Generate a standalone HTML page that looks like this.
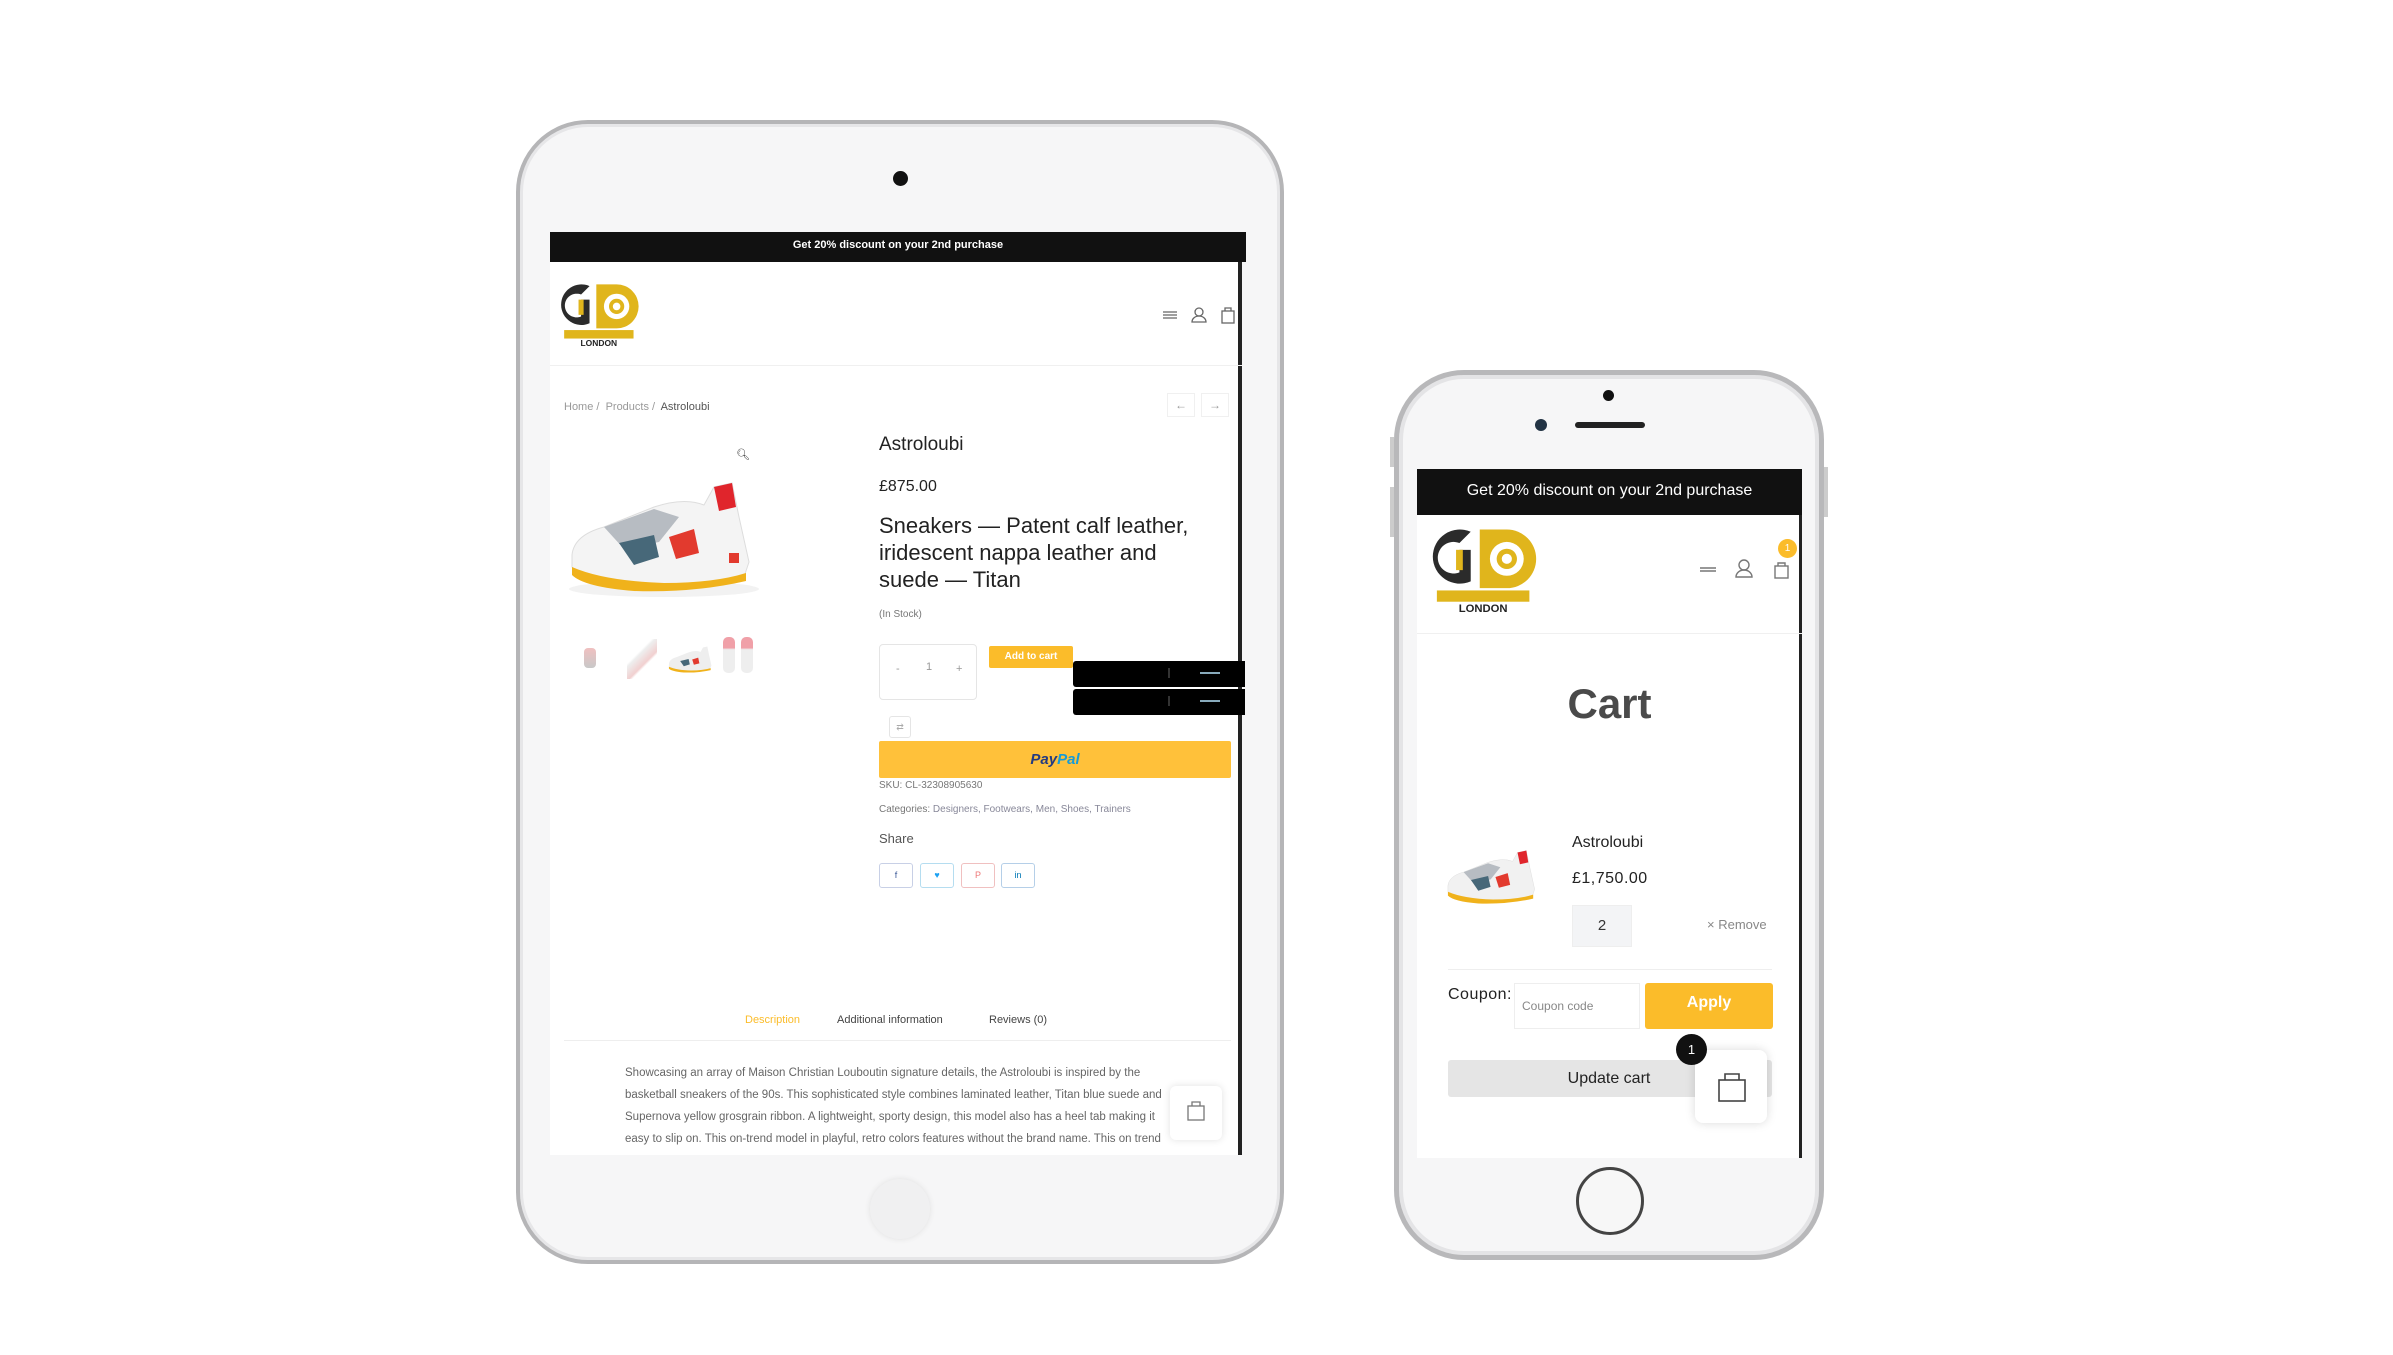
<!DOCTYPE html>
<html><head><meta charset="utf-8"><style>
*{margin:0;padding:0;box-sizing:border-box}
body{width:2393px;height:1355px;background:#fff;position:relative;overflow:hidden;font-family:"Liberation Sans",sans-serif;color:#222}
.a{position:absolute}
.t{position:absolute;white-space:nowrap}
.g{position:absolute;left:0;top:0;width:2393px;height:1355px}
</style></head><body>
<div class="g" style="transform:translate(-5px,-3px)">
<!-- iPad -->
<div class="a" style="left:521px;top:123px;width:768px;height:1144px;border-radius:72px;background:#f6f6f7;border:4px solid #b5b5b7;box-shadow:inset 0 0 0 3px #e6e6e8"></div>
<div class="a" style="left:898px;top:174px;width:15px;height:15px;border-radius:50%;background:#111"></div>
<div class="a" style="left:875px;top:1182px;width:60px;height:60px;border-radius:50%;background:#f0f0f1;box-shadow:0 0 6px #e0e0e0"></div>
<div class="a" style="left:555px;top:235px;width:692px;height:923px;background:#fff;border-right:4px solid #222"></div>
<div class="a" style="left:555px;top:235px;width:696px;height:30px;background:#111"></div>
<div class="t" style="left:555px;top:242px;width:696px;text-align:center;color:#fff;font-size:11px;font-weight:bold">Get 20% discount on your 2nd purchase</div>
<svg class="a" style="left:560px;top:284px" width="86" height="66" viewBox="0 0 100 78">
<path d="M40 6 A24 24 0 1 0 40 50 L40 22 L30 22 L30 42 A14 14 0 1 1 30 16 Z" fill="#2b2b2b"/>
<rect x="27" y="22" width="6" height="18" fill="#e0b51c"/>
<path d="M48 4 H72 A26 26 0 0 1 72 56 H48 Z" fill="#e0b51c"/>
<circle cx="72" cy="30" r="15" fill="#fff"/><circle cx="72" cy="30" r="9" fill="#e0b51c"/><circle cx="72" cy="30" r="4.5" fill="#fff"/>
<rect x="10" y="58" width="82" height="10" fill="#e0b51c"/>
<text x="51" y="77" text-anchor="middle" font-size="10" font-weight="bold" fill="#222" font-family="Liberation Sans">LONDON</text>
</svg>
<svg class="a" style="left:1166px;top:308px" width="80" height="20" viewBox="0 0 80 20" fill="none" stroke="#666" stroke-width="1.3">
<path d="M2 7h14M2 10h14M2 13h14"/><circle cx="38" cy="7" r="4"/><path d="M31 17a7 6 0 0 1 14 0z"/><rect x="61" y="6" width="12" height="12"/><path d="M64 6v-3h6v3"/>
</svg>
<div class="a" style="left:555px;top:368px;width:692px;height:1px;background:#f0f0f0"></div>
<div class="t" style="left:569px;top:404px;font-size:11px;color:#999">Home /&nbsp; Products /&nbsp; <span style="color:#555">Astroloubi</span></div>
<div class="a" style="left:1172px;top:396px;width:28px;height:24px;border:1px solid #f0f0f0;color:#999;font-size:12px;text-align:center;line-height:22px">←</div>
<div class="a" style="left:1206px;top:396px;width:28px;height:24px;border:1px solid #f0f0f0;color:#999;font-size:12px;text-align:center;line-height:22px">→</div>
<div class="t" style="left:741px;top:451px;font-size:11px;color:#333">&#x1F50D;&#xFE0E;</div>
<svg class="a" style="left:568px;top:480px" width="202" height="124" viewBox="0 0 200 124">
<ellipse cx="100" cy="112" rx="95" ry="8" fill="#f2f2f2"/>
<path d="M8 78 Q10 58 40 50 L90 30 Q120 20 140 28 L150 10 L168 6 L175 40 L185 85 L180 100 Q120 112 60 106 Q20 104 8 90Z" fill="#f4f4f4" stroke="#ddd"/>
<path d="M40 50 L90 32 L115 40 L95 65 L60 72Z" fill="#b7bcc2"/>
<path d="M55 66 L90 58 L95 80 L70 88Z" fill="#476879"/>
<path d="M105 60 L130 52 L135 76 L112 82Z" fill="#e23a2e"/>
<path d="M150 10 L168 6 L172 30 L155 34Z" fill="#e0252c"/>
<path d="M8 90 Q40 104 100 106 Q150 106 182 96 L182 104 Q130 116 70 114 Q20 110 8 98Z" fill="#f0b21b"/>
<rect x="165" y="76" width="10" height="10" fill="#e23a2e"/>
</svg>
<div class="a" style="left:589px;top:651px;width:12px;height:20px;background:linear-gradient(#f0c0c0,#c8c8c8);border-radius:4px"></div>
<div class="a" style="left:632px;top:642px;width:30px;height:40px;background:linear-gradient(135deg,transparent 35%,#eee 40%,#f1d0d0 60%,transparent 65%)"></div>
<svg class="a" style="left:672px;top:648px" width="48" height="30" viewBox="0 0 200 124"><path d="M8 78 Q10 58 40 50 L90 30 Q120 20 140 28 L150 10 L168 6 L175 40 L185 85 L180 100 Q120 112 60 106 Q20 104 8 90Z" fill="#eee"/><path d="M55 66 L90 58 L95 80 L70 88Z" fill="#476879"/><path d="M105 60 L130 52 L135 76 L112 82Z" fill="#e23a2e"/><path d="M8 90 Q40 104 100 106 Q150 106 182 96 L182 104 Q130 116 70 114 Q20 110 8 98Z" fill="#f0b21b"/></svg>
<div class="a" style="left:728px;top:640px;width:12px;height:36px;background:linear-gradient(#f0a0a8 30%,#eee 35%);border-radius:5px"></div>
<div class="a" style="left:746px;top:640px;width:12px;height:36px;background:linear-gradient(#f0a0a8 30%,#eee 35%);border-radius:5px"></div>
<div class="t" style="left:884px;top:437px;font-size:19px;color:#222">Astroloubi</div>
<div class="t" style="left:884px;top:481px;font-size:16px;color:#222">£875.00</div>
<div class="a" style="left:884px;top:515px;width:340px;font-size:22px;line-height:27px;color:#222">Sneakers — Patent calf leather, iridescent nappa leather and suede — Titan</div>
<div class="t" style="left:884px;top:612px;font-size:10px;color:#777">(In Stock)</div>
<div class="a" style="left:884px;top:647px;width:98px;height:56px;border:1px solid #e5e5e5;border-radius:4px;font-size:11px;color:#999"><span class="t" style="left:16px;top:18px">-</span><span class="t" style="left:46px;top:16px">1</span><span class="t" style="left:76px;top:18px">+</span></div>
<div class="a" style="left:994px;top:649px;width:84px;height:22px;background:#fbbc2a;border-radius:2px;color:#fff;font-size:10px;font-weight:bold;text-align:center;line-height:22px">Add to cart</div>
<div class="a" style="left:1078px;top:664px;width:172px;height:26px;background:#000;border-radius:3px 0 0 3px"></div>
<div class="a" style="left:1078px;top:692px;width:172px;height:26px;background:#000;border-radius:3px 0 0 3px"></div>
<div class="a" style="left:1173px;top:671px;width:2px;height:10px;background:#333"></div><div class="a" style="left:1205px;top:675px;width:20px;height:2px;background:#8ab"></div>
<div class="a" style="left:1173px;top:699px;width:2px;height:10px;background:#333"></div><div class="a" style="left:1205px;top:703px;width:20px;height:2px;background:#8ab"></div>
<div class="a" style="left:894px;top:719px;width:22px;height:22px;border:1px solid #e5e5e5;border-radius:3px;font-size:9px;color:#aaa;text-align:center;line-height:20px">⇄</div>
<div class="a" style="left:884px;top:744px;width:352px;height:37px;background:#ffc13a;border-radius:2px;text-align:center;line-height:37px;font-size:15px;font-weight:bold;font-style:italic"><span style="color:#253b80">Pay</span><span style="color:#179bd7">Pal</span></div>
<div class="t" style="left:884px;top:783px;font-size:10px;color:#777">SKU: CL-32308905630</div>
<div class="t" style="left:884px;top:807px;font-size:10px;color:#777">Categories: <span style="color:#889">Designers, Footwears, Men, Shoes, Trainers</span></div>
<div class="t" style="left:884px;top:834px;font-size:13px;color:#555">Share</div>
<div class="a" style="left:884px;top:866px;width:34px;height:25px;border:1px solid #c8d0e6;border-radius:3px;font-size:9px;color:#3b5998;text-align:center;line-height:23px">f</div>
<div class="a" style="left:925px;top:866px;width:34px;height:25px;border:1px solid #b5ddf0;border-radius:3px;font-size:9px;color:#1da1f2;text-align:center;line-height:23px">♥</div>
<div class="a" style="left:966px;top:866px;width:34px;height:25px;border:1px solid #f0c0c0;border-radius:3px;font-size:9px;color:#e77;text-align:center;line-height:23px">P</div>
<div class="a" style="left:1006px;top:866px;width:34px;height:25px;border:1px solid #b5cfe8;border-radius:3px;font-size:9px;color:#0077b5;text-align:center;line-height:23px">in</div>
<div class="t" style="left:750px;top:1017px;font-size:11px;color:#fbbc2a">Description</div>
<div class="t" style="left:842px;top:1017px;font-size:11px;color:#444">Additional information</div>
<div class="t" style="left:994px;top:1017px;font-size:11px;color:#444">Reviews (0)</div>
<div class="a" style="left:569px;top:1043px;width:667px;height:1px;background:#eee"></div>
<div class="a" style="left:630px;top:1065px;width:545px;height:93px;overflow:hidden;font-size:11.5px;line-height:22px;color:#666">Showcasing an array of Maison Christian Louboutin signature details, the Astroloubi is inspired by the basketball sneakers of the 90s. This sophisticated style combines laminated leather, Titan blue suede and Supernova yellow grosgrain ribbon. A lightweight, sporty design, this model also has a heel tab making it easy to slip on. This on-trend model in playful, retro colors features without the brand name. This on trend model</div>
<div class="a" style="left:1175px;top:1089px;width:52px;height:54px;background:#fff;border-radius:6px;box-shadow:0 0 8px rgba(0,0,0,.12)"></div>
<svg class="a" style="left:1191px;top:1103px" width="20" height="22" viewBox="0 0 20 22" fill="none" stroke="#777" stroke-width="1.3"><rect x="2" y="6" width="16" height="14"/><path d="M6 6V2h8v4"/></svg>
</div>

<div class="g" style="transform:translate(-8px,-3px)">
<!-- iPhone -->
<div class="a" style="left:1402px;top:373px;width:430px;height:890px;border-radius:70px;background:#f6f6f7;border:5px solid #b8b8ba;box-shadow:inset 0 0 0 4px #e4e4e6"></div>
<div class="a" style="left:1398px;top:440px;width:4px;height:30px;background:#ccc"></div>
<div class="a" style="left:1398px;top:490px;width:4px;height:50px;background:#ccc"></div>
<div class="a" style="left:1832px;top:470px;width:4px;height:50px;background:#ccc"></div>
<div class="a" style="left:1611px;top:393px;width:11px;height:11px;border-radius:50%;background:#111"></div>
<div class="a" style="left:1543px;top:422px;width:12px;height:12px;border-radius:50%;background:#234"></div>
<div class="a" style="left:1583px;top:425px;width:70px;height:6px;border-radius:3px;background:#222"></div>
<div class="a" style="left:1584px;top:1170px;width:68px;height:68px;border-radius:50%;border:3px solid #444;background:#f7f7f7"></div>
<div class="a" style="left:1425px;top:472px;width:385px;height:689px;background:#fff;border-right:3px solid #222"></div>
<div class="a" style="left:1425px;top:472px;width:385px;height:46px;background:#111"></div>
<div class="t" style="left:1425px;top:485px;width:385px;text-align:center;color:#fff;font-size:16px">Get 20% discount on your 2nd purchase</div>
<svg class="a" style="left:1433px;top:528px" width="114" height="88" viewBox="0 0 100 78">
<path d="M40 6 A24 24 0 1 0 40 50 L40 22 L30 22 L30 42 A14 14 0 1 1 30 16 Z" fill="#2b2b2b"/>
<rect x="27" y="22" width="6" height="18" fill="#e0b51c"/>
<path d="M48 4 H72 A26 26 0 0 1 72 56 H48 Z" fill="#e0b51c"/>
<circle cx="72" cy="30" r="15" fill="#fff"/><circle cx="72" cy="30" r="9" fill="#e0b51c"/><circle cx="72" cy="30" r="4.5" fill="#fff"/>
<rect x="10" y="58" width="82" height="10" fill="#e0b51c"/>
<text x="51" y="77" text-anchor="middle" font-size="10" font-weight="bold" fill="#222" font-family="Liberation Sans">LONDON</text>
</svg>
<svg class="a" style="left:1705px;top:560px" width="96" height="24" viewBox="0 0 96 24" fill="none" stroke="#777" stroke-width="1.4">
<path d="M3 11h16M3 14h16"/><circle cx="47" cy="8" r="5"/><path d="M39 20a8 7 0 0 1 16 0z"/><rect x="78" y="9" width="13" height="12"/><path d="M81 9v-3h7v3"/>
</svg>
<div class="a" style="left:1786px;top:542px;width:19px;height:19px;border-radius:50%;background:#fbbc2a;color:#fff;font-size:10px;text-align:center;line-height:19px">1</div>
<div class="a" style="left:1425px;top:636px;width:385px;height:1px;background:#f0f0f0"></div>
<div class="t" style="left:1425px;top:683px;width:385px;text-align:center;font-size:42px;font-weight:bold;color:#4a4a4a">Cart</div>
<svg class="a" style="left:1452px;top:848px" width="98" height="66" viewBox="0 0 200 124">
<path d="M8 78 Q10 58 40 50 L90 30 Q120 20 140 28 L150 10 L168 6 L175 40 L185 85 L180 100 Q120 112 60 106 Q20 104 8 90Z" fill="#f1f1f1" stroke="#ddd"/>
<path d="M40 50 L90 32 L115 40 L95 65 L60 72Z" fill="#b7bcc2"/>
<path d="M55 66 L90 58 L95 80 L70 88Z" fill="#476879"/>
<path d="M105 60 L130 52 L135 76 L112 82Z" fill="#e23a2e"/>
<path d="M150 10 L168 6 L172 30 L155 34Z" fill="#e0252c"/>
<path d="M8 90 Q40 104 100 106 Q150 106 182 96 L182 104 Q130 116 70 114 Q20 110 8 98Z" fill="#f0b21b"/>
</svg>
<div class="t" style="left:1580px;top:837px;font-size:16px;color:#222">Astroloubi</div>
<div class="t" style="left:1580px;top:873px;font-size:16px;color:#222;letter-spacing:.5px">£1,750.00</div>
<div class="a" style="left:1580px;top:908px;width:60px;height:42px;background:#f3f4f6;border:1px solid #eee;text-align:center;line-height:40px;font-size:15px;color:#333">2</div>
<div class="t" style="left:1715px;top:920px;font-size:13px;color:#888">× Remove</div>
<div class="a" style="left:1456px;top:972px;width:324px;height:1px;background:#eee"></div>
<div class="t" style="left:1456px;top:989px;font-size:16px;color:#222;letter-spacing:.5px">Coupon:</div>
<div class="a" style="left:1522px;top:986px;width:126px;height:46px;border:1px solid #eee"></div>
<div class="t" style="left:1530px;top:1002px;font-size:12px;color:#888">Coupon code</div>
<div class="a" style="left:1653px;top:986px;width:128px;height:46px;background:#fbbc2a;border-radius:3px;color:#fff;font-size:16px;font-weight:bold;text-align:center;line-height:40px">Apply</div>
<div class="a" style="left:1456px;top:1063px;width:324px;height:37px;background:#e5e5e5;border-radius:3px;text-align:center;line-height:37px;font-size:16px;color:#222;padding-right:2px">Update cart</div>
<div class="a" style="left:1703px;top:1053px;width:72px;height:73px;background:#fff;border-radius:8px;box-shadow:0 0 10px rgba(0,0,0,.15)"></div>
<svg class="a" style="left:1725px;top:1074px" width="30" height="32" viewBox="0 0 30 32" fill="none" stroke="#444" stroke-width="1.6"><rect x="2" y="9" width="26" height="21"/><path d="M8 9V3h14v6"/></svg>
<div class="a" style="left:1684px;top:1037px;width:31px;height:31px;border-radius:50%;background:#111;color:#fff;font-size:13px;text-align:center;line-height:31px">1</div>
</div>
</body></html>
